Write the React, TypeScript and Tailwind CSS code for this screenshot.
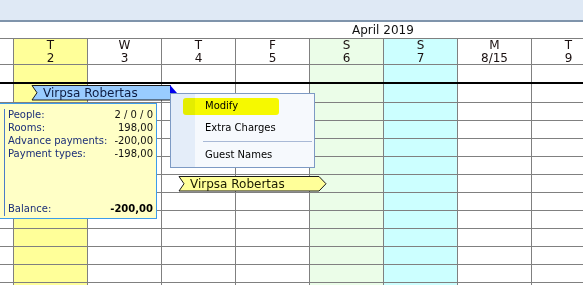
const font = { fontFamily: '"DejaVu Sans", Verdana, sans-serif' };

type Col = { d: string; n: string; bg: string };

const cols: Col[] = [
  { d: "T", n: "2", bg: "bg-[#ffff99]" },
  { d: "W", n: "3", bg: "bg-white" },
  { d: "T", n: "4", bg: "bg-white" },
  { d: "F", n: "5", bg: "bg-white" },
  { d: "S", n: "6", bg: "bg-[#ebfde8]" },
  { d: "S", n: "7", bg: "bg-[#ccffff]" },
  { d: "M", n: "8/15", bg: "bg-white" },
  { d: "T", n: "9", bg: "bg-white" },
];

function Row({ h, border, children }: { h: string; border: string; children?: (c: Col) => React.ReactNode }) {
  return (
    <div className={`flex shrink-0 ${h} ${border}`}>
      <div className="w-[13px] shrink-0" />
      {cols.map((c, i) => (
        <div key={i} className={`w-[74px] shrink-0 border-l border-[#808080] ${c.bg}`}>
          {children ? children(c) : null}
        </div>
      ))}
    </div>
  );
}

function Tooltip() {
  const lines = [
    ["People:", "2 / 0 / 0"],
    ["Rooms:", "198,00"],
    ["Advance payments:", "-200,00"],
    ["Payment types:", "-198,00"],
  ];
  return (
    <div className="absolute left-[-1px] top-[103px] w-[158px] h-[116px] bg-[#ffffc6] border border-[#3c9bea] flex flex-col justify-between pl-[8px] pr-[3px] pt-[4px] pb-[3px] text-[10px] leading-[13px]">
      <div className="absolute left-[4px] top-[5px] w-px h-[107px] bg-[#4a7bc8]" />
      <div className="flex flex-col">
        {lines.map(([l, v]) => (
          <div key={l} className="flex justify-between">
            <span className="text-[#1c2f78]">{l}</span>
            <span className="text-[#111]">{v}</span>
          </div>
        ))}
      </div>
      <div className="flex justify-between">
        <span className="text-[#1c2f78]">Balance:</span>
        <span className="text-black font-bold">-200,00</span>
      </div>
    </div>
  );
}

function Menu() {
  return (
    <div className="absolute left-[170px] top-[93px] w-[145px] h-[75px] border border-[#7d9ac4] bg-[#f6f9fd] flex text-[10px] leading-[13px] text-black">
      <div className="w-[24px] shrink-0 bg-[#e4edf9]" />
      <div className="absolute left-[12px] top-[4px] w-[96px] h-[17px] bg-[#ffff00] mix-blend-multiply rounded-[3px] blur-[0.6px]" />
      <div className="flex flex-col pl-[10px] pt-px">
        <div className="h-[22px] flex items-center">Modify</div>
        <div className="h-[22px] flex items-center">Extra Charges</div>
        <div className="mt-[3px] ml-[-2px] w-[109px] h-px bg-[#a9b9d6]" />
        <div className="h-[26px] flex items-center">Guest Names</div>
      </div>
    </div>
  );
}

function BlueBar() {
  return (
    <div className="absolute left-[30px] top-[84px] w-[150px] h-[18px]">
      <svg className="absolute inset-0" width="150" height="18">
        <polygon points="2,1.5 140.5,1.5 140.5,16 2,16 7,8.75" fill="#99ccff" stroke="#1a1a1a" strokeWidth="1" />
        <polygon points="140,1 140,9 147,9" fill="#0000ee" />
      </svg>
      <span className="relative block pl-[13px] text-[12px] leading-[18px] text-[#0d1b40]">Virpsa Robertas</span>
    </div>
  );
}

function YellowBar() {
  return (
    <div className="absolute left-[177px] top-[175px] w-[152px] h-[18px]">
      <svg className="absolute inset-0" width="152" height="18">
        <polygon points="2,1.5 142,1.5 149,8.75 142,16 2,16 7,8.75" fill="#ffff99" stroke="#1a1a1a" strokeWidth="1" />
      </svg>
      <span className="relative block pl-[13px] text-[12px] leading-[18px] text-[#1a1a00]">Virpsa Robertas</span>
    </div>
  );
}

export default function App() {
  return (
    <div className="relative w-[583px] h-[285px] overflow-hidden bg-white flex flex-col" style={font}>
      <div className="h-[20px] shrink-0 bg-[#dfe9f5]" />
      <div className="h-[2px] shrink-0 bg-[#7f94ab]" />
      <div className="h-[16px] shrink-0 pl-[352px] text-[12px] leading-[16px] text-[#111]">April 2019</div>
      <Row h="h-[27px]" border="border-y border-[#808080]">
        {(c) => (
          <div className="flex flex-col items-center text-[12px] leading-[13px] text-[#1a1010]">
            <span>{c.d}</span>
            <span>{c.n}</span>
          </div>
        )}
      </Row>
      <Row h="h-[19px]" border="border-b-2 border-b-black" />
      <Row h="h-[19px]" border="border-b border-b-[#808080]" />
      {Array.from({ length: 11 }).map((_, i) => (
        <Row key={i} h="h-[18px]" border="border-b border-b-[#808080]" />
      ))}
      <BlueBar />
      <Tooltip />
      <Menu />
      <YellowBar />
    </div>
  );
}
